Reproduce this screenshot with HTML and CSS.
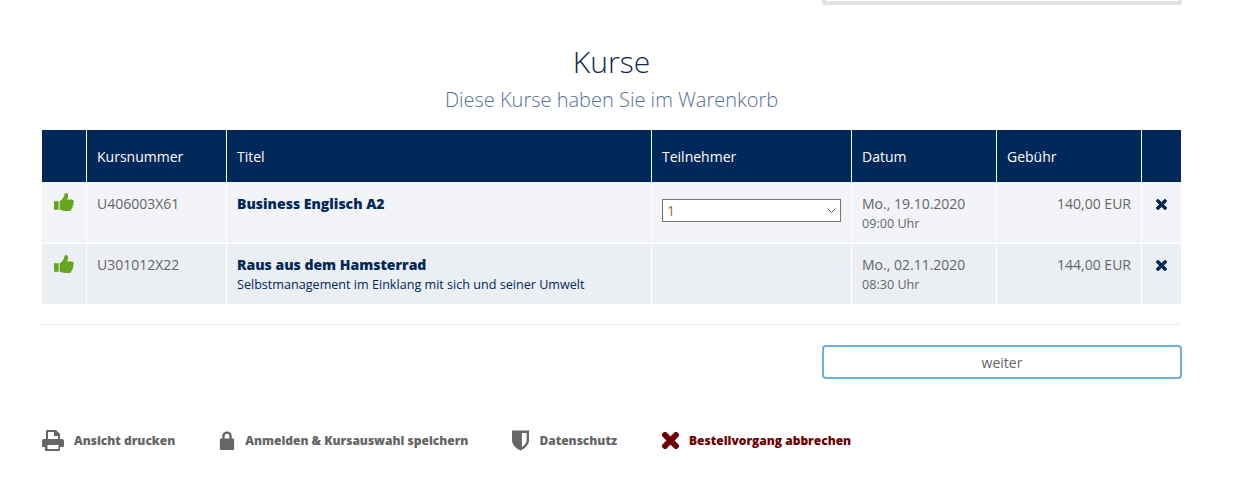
FILE: index.html
```html
<!DOCTYPE html>
<html lang="de">
<head>
<meta charset="utf-8">
<title>Kurse</title>
<link rel="stylesheet" href="styles.css">
</head>
<body>
<div class="page">
  <div class="topbar"><div class="search-stub"></div></div>
  <h1 class="title">Kurse</h1>
  <h2 class="subtitle">Diese Kurse haben Sie im Warenkorb</h2>
  <table class="cart">
    <colgroup>
      <col class="c1"><col class="c2"><col class="c3"><col class="c4"><col class="c5"><col class="c6"><col class="c7">
    </colgroup>
    <thead>
      <tr><th></th><th>Kursnummer</th><th>Titel</th><th>Teilnehmer</th><th>Datum</th><th>Gebühr</th><th></th></tr>
    </thead>
    <tbody>
      <tr class="row-a">
        <td class="thumb"><svg class="ico-thumb" viewBox="0 0 20 18"><path d="M0 8.2h4.6v8.6H0z"/><path d="M5.6 8.4c1.7-1 3.5-2.8 4.3-4.9.4-1.2.5-3.5 1.9-3.5 2.2 0 2.6 2.2 2.2 4-.2.9-.6 1.7-.9 2.4h4.6c1.2 0 2.2 1 2.2 2.1 0 .7-.4 1.3-.8 1.7.3.4.4.8.4 1.3 0 .8-.4 1.4-1 1.8.1.3.1.5.1.8 0 .8-.5 1.5-1.2 1.8 0 1.3-1 2-2.3 2H11c-2 0-3.8-.9-5.4-1.4z"/></svg></td>
        <td>U406003X61</td>
        <td><strong class="course">Business Englisch A2</strong></td>
        <td class="sel-cell">
          <div class="qty-wrap">
            <select class="qty"><option>1</option></select>
            <svg class="chev" width="9" height="5" viewBox="0 0 9 5"><path d="M.5.5 4.500 4.500 8.500.5"/></svg>
          </div>
        </td>
        <td><div>Mo., 19.10.2020</div><div class="small">09:00 Uhr</div></td>
        <td class="fee">140,00 EUR</td>
        <td class="rm"><svg class="ico-x" viewBox="0 0 10 10"><path d="M2.3.4 5 3.1 7.7.4q.5-.4 1 0l.9.9q.4.5 0 1L6.900 5l2.700 2.700q.4.500 0 1l-.9.900q-.5.400-1 0L5 6.900 2.300 9.600q-.5.400-1 0l-.9-.9q-.4-.5 0-1L3.100 5 .4 2.300q-.4-.5 0-1l.9-.9q.5-.4 1 0z"/></svg></td>
      </tr>
      <tr class="row-b">
        <td class="thumb"><svg class="ico-thumb" viewBox="0 0 20 18"><path d="M0 8.2h4.6v8.6H0z"/><path d="M5.6 8.4c1.7-1 3.5-2.8 4.3-4.9.4-1.2.5-3.5 1.9-3.5 2.2 0 2.6 2.2 2.2 4-.2.9-.6 1.7-.9 2.4h4.6c1.2 0 2.2 1 2.2 2.1 0 .7-.4 1.3-.8 1.7.3.4.4.8.4 1.3 0 .8-.4 1.4-1 1.8.1.3.1.5.1.8 0 .8-.5 1.5-1.2 1.8 0 1.3-1 2-2.3 2H11c-2 0-3.8-.9-5.4-1.4z"/></svg></td>
        <td>U301012X22</td>
        <td><strong class="course">Raus aus dem Hamsterrad</strong><div class="desc">Selbstmanagement im Einklang mit sich und seiner Umwelt</div></td>
        <td></td>
        <td><div>Mo., 02.11.2020</div><div class="small">08:30 Uhr</div></td>
        <td class="fee">144,00 EUR</td>
        <td class="rm"><svg class="ico-x" viewBox="0 0 10 10"><path d="M2.3.4 5 3.1 7.7.4q.5-.4 1 0l.9.9q.4.5 0 1L6.900 5l2.700 2.700q.4.500 0 1l-.9.900q-.5.400-1 0L5 6.900 2.300 9.600q-.5.400-1 0l-.9-.9q-.4-.5 0-1L3.100 5 .4 2.300q-.4-.5 0-1l.9-.9q.5-.4 1 0z"/></svg></td>
      </tr>
    </tbody>
  </table>
  <hr class="rule">
  <div class="actions"><button class="next" type="button">weiter</button></div>
  <nav class="links">
    <a class="link l-print"><svg class="ico" width="22" height="21" viewBox="0 0 22 21"><path fill-rule="evenodd" d="M5 0h9l4 4v5h2a2 2 0 0 1 2 2v5a1 1 0 0 1-1 1h-3v3a1 1 0 0 1-1 1H4a1 1 0 0 1-1-1v-3H1a1 1 0 0 1-1-1v-5a2 2 0 0 1 2-2h2V1a1 1 0 0 1 1-1zm1 2v7h10V6h-4V2zM5.500 15v4h11v-4z"/></svg>Ansicht drucken</a>
    <a class="link l-lock"><svg class="ico" width="16" height="19" viewBox="0 0 16 20"><path fill-rule="evenodd" d="M3 8V5.500a5 5 0 0 1 10 0V8h1.500a1 1 0 0 1 1 1v10a1 1 0 0 1-1 1h-13a1 1 0 0 1-1-1V9a1 1 0 0 1 1-1zm2.500 0h5V5.500a2.500 2.500 0 0 0-5 0z"/></svg>Anmelden &amp; Kursauswahl speichern</a>
    <a class="link l-shield"><svg class="ico" width="17" height="21" viewBox="0 0 18 21"><path fill-rule="evenodd" d="M0 0h18v10c0 5-4 9-9 11-5-2-9-6-9-11zm10.500 2.500v15c2.500-1.500 5-4 5-7.500V2.500z"/></svg>Datenschutz</a>
    <a class="link l-cancel"><svg class="ico" width="17" height="17" viewBox="0 0 10 10"><path d="M2.3.4 5 3.1 7.7.4q.5-.4 1 0l.9.9q.4.5 0 1L6.900 5l2.700 2.700q.4.500 0 1l-.9.900q-.5.400-1 0L5 6.900 2.300 9.600q-.5.400-1 0l-.9-.9q-.4-.5 0-1L3.100 5 .4 2.300q-.4-.5 0-1l.9-.9q.5-.4 1 0z"/></svg>Bestellvorgang abbrechen</a>
  </nav>
</div>
</body>
</html>
```
FILE: styles.css
```css
* { box-sizing: border-box; }
html, body { margin: 0; padding: 0; }
body {
  background: #fff;
  font-family: "Open Sans", sans-serif;
  font-size: 14px;
  color: #666;
}
.page { width: 1139px; margin-left: 42px; }
.topbar { display: flex; justify-content: flex-end; height: 5px; margin-right: -1px; }
.search-stub {
  width: 360px;
  height: 5px;
  border: 4px solid #e2e2e2;
  border-top: 0;
  border-radius: 0 0 4px 4px;
}
.title {
  margin: 37px 0 0;
  height: 40px;
  line-height: 40px;
  font-size: 30px;
  font-weight: 300;
  color: #0f2a50;
  text-align: center;
}
.subtitle {
  margin: 5px 0 0;
  height: 26px;
  line-height: 26px;
  font-size: 20px;
  font-weight: 300;
  color: #55709c;
  text-align: center;
}
.cart {
  width: 1139px;
  margin-top: 17px;
  border-collapse: separate;
  border-spacing: 0;
  table-layout: fixed;
}
.c1 { width: 45px; }
.c2 { width: 140px; }
.c3 { width: 425px; }
.c4 { width: 200px; }
.c5 { width: 145px; }
.c6 { width: 145px; }
.c7 { width: 39px; }
.cart th {
  height: 52px;
  padding: 0 10px;
  background: #002859;
  color: #fff;
  font-size: 14px;
  font-weight: 400;
  text-align: left;
  vertical-align: middle;
  border-right: 1px solid #fff;
}
.cart th:last-child, .cart td:last-child { border-right: 0; }
.cart td {
  padding: 12px 10px 0;
  line-height: 20px;
  vertical-align: top;
  border-right: 1px solid #fff;
}
.row-a td { height: 62px; background: #f2f4f8; border-bottom: 1px solid #fff; }
.row-b td { height: 60px; background: #ebeef3; padding-top: 11px; }
.cart .thumb { padding: 11px 0 0 12px; }
.ico-thumb { display: block; width: 20px; height: 18px; fill: #66a61e; }
.course { color: #002859; font-weight: 800; font-size: 14px; }
.small { font-size: 12.6px; line-height: 19px; }
.desc { color: #002859; font-size: 12.6px; line-height: 19px; }
.cart .sel-cell { padding-top: 17px; }
.qty-wrap { position: relative; width: 179px; }
.qty {
  display: block;
  width: 179px;
  height: 23px;
  padding: 0 0 0 4px;
  border: 1px solid #767676;
  border-radius: 0;
  background: #fff;
  appearance: none;
  font-family: "Open Sans", sans-serif;
  font-size: 14px;
  color: #8a7440;
}
.chev { position: absolute; right: 5px; top: 9px; fill: none; stroke: #555; stroke-width: 1; }
.cart .fee { text-align: right; }
.cart .rm { padding: 16px 0 0 14px; }
.row-a .rm { padding-top: 17px; }
.ico-x { display: block; width: 11px; height: 11px; fill: #002859; stroke: #002859; stroke-width: .8; }
.rule { margin: 20px 0 0; border: 0; border-top: 1px solid #eee; height: 0; }
.actions { display: flex; justify-content: flex-end; margin: 20px -1px 0 0; }
.next {
  width: 360px;
  height: 34px;
  padding: 0;
  border: 2px solid #6cb0e0;
  border-radius: 4px;
  background: #fff;
  font-family: "Open Sans", sans-serif;
  font-size: 14px;
  color: #666;
}
.links { display: flex; align-items: center; margin-top: 51px; height: 21px; }
.link {
  display: flex;
  align-items: center;
  font-size: 12px;
  font-weight: 800;
  color: #666;
}
.ico { display: block; fill: #666; margin-right: 10px; flex: none; }
.l-print { margin-right: 44px; }
.l-lock { margin-right: 44px; }
.l-shield { margin-right: 45px; }
.l-cancel { color: #6d0000; }
.l-cancel .ico { fill: #6d0000; stroke: #6d0000; stroke-width: .7; }
```
